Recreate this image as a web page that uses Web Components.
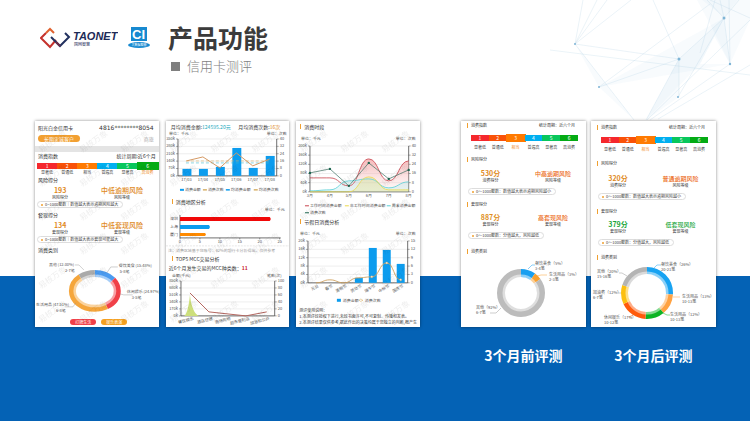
<!DOCTYPE html>
<html lang="zh-CN">
<head>
<meta charset="utf-8">
<title>产品功能 - 信用卡测评</title>
<style>
  body { margin: 0; font-family: "Noto Sans CJK SC", "Liberation Sans", sans-serif; color: #404040; }
</style>
</head>
<body>
<feature-slide></feature-slide>
<script>
const BASE = `
  * { box-sizing: border-box; }
  :host { display: block; }
  svg { display: block; width: 100%; height: auto; }
  svg text { font-size: 4px; fill: #555; }
`;

function define(name, html) {
  customElements.define(name, class extends HTMLElement {
    constructor() {
      super();
      this.attachShadow({ mode: 'open' });
    }
    connectedCallback() {
      const body = typeof html === 'function' ? html(this) : html;
      this.shadowRoot.innerHTML = `<style>${BASE}</style>${body}`;
    }
  });
}

/* ---------- drawing helpers ---------- */
const text = (x, y, s, extra = '') => `<text x="${x}" y="${y}" ${extra}>${s}</text>`;
const poly = (pts, colour, extra = '') =>
  `<polyline points="${pts.map(p => p.join()).join(' ')}" fill="none" stroke="${colour}" ${extra}/>`;

function curve(pts) {
  let d = `M${pts[0].join()}`;
  for (let i = 1; i < pts.length; i++) {
    const m = (pts[i - 1][0] + pts[i][0]) / 2;
    d += ` C${m},${pts[i - 1][1]} ${m},${pts[i][1]} ${pts[i].join()}`;
  }
  return d;
}

function axes({ x0, x1, y0, y1, left, right, cats, xs, rotate }) {
  const step = (y1 - y0) / (left.length - 1);
  let out = '';
  left.forEach((l, i) => {
    const y = y0 + i * step;
    out += `<path d="M${x0} ${y}H${x1}" stroke="#ddd" stroke-width=".5"/>
            <path d="M${x0 - 2} ${y}h2M${x1} ${y}h2" stroke="#555" stroke-width=".5"/>`;
    out += text(x0 - 3, y + 1, l, 'text-anchor="end"') + text(x1 + 3, y + 1, right[i]);
  });
  out += `<path d="M${x0} ${y0}V${y1}H${x1}V${y0}" fill="none" stroke="#333" stroke-width=".7"/>`;
  cats.forEach((c, i) => {
    out += rotate
      ? text(xs[i] + 3, y1 + 4, c, `text-anchor="end" transform="rotate(${rotate} ${xs[i] + 3} ${y1 + 4})"`)
      : text(xs[i], y1 + 5, c, 'text-anchor="middle"');
  });
  return out;
}

function ring(cx, cy, rx, ry, width, parts) {
  let at = 0, out = '';
  for (const [share, colour] of parts) {
    out += `<ellipse cx="${cx}" cy="${cy}" rx="${rx - width / 2}" ry="${ry - width / 2}" pathLength="100"
      fill="none" stroke="${colour}" stroke-width="${width}" stroke-dasharray="${share} ${100 - share}"
      stroke-dashoffset="${25 - at}"/>`;
    at += share;
  }
  return out + `<ellipse cx="${cx}" cy="${cy}" rx="${rx - width + 1}" ry="${ry - width + 1}"
    fill="none" stroke="#fff" stroke-opacity=".5" stroke-width="3"/>`;
}

/* ---------- header ---------- */
define('brand-logo', `
  <style>
    :host { display: flex; align-items: center; gap: 10px; }
    .mark { width: 78px; }
    .ci { width: 22px; }
    .mark .name { font: italic bold 11px "Liberation Sans", sans-serif; fill: #1d2b57; }
    .mark .sub { font-size: 4px; fill: #1d2b57; }
    .ci .letters { font: bold 13px "Liberation Sans", sans-serif; fill: #fff; }
    .ci .tiny { font-size: 3px; fill: #fff; }
  </style>
  <svg class="mark" viewBox="0 0 78 22">
    <g fill="none" stroke-width="2">
      <path d="M14 6 10 2 6 6" stroke="#e0622f"/>
      <path d="M6 6 1 11 10 20 16 13" stroke="#c5322d"/>
      <path d="M11 10 20 19 29 10 25 6" stroke="#22315f"/>
      <path d="M16 15 20 19" stroke="#6c2c48"/>
    </g>
    <text class="name" x="33" y="13">TAONET</text>
    <text class="sub" x="34" y="19">国网智慧</text>
  </svg>
  <svg class="ci" viewBox="0 0 22 22">
    <path d="M3 0H19V14H3Z" fill="#1789d0"/>
    <text class="letters" x="4" y="12">CI</text>
    <ellipse cx="11" cy="18" rx="11" ry="3" fill="#1789d0"/>
    <text class="tiny" x="11" y="19" text-anchor="middle">大数据智能</text>
  </svg>`);

define('slide-heading', `
  <style>
    h1 { margin: 0; font-size: 25px; line-height: 30px; font-weight: 700; color: #3b3b3b; }
    p { margin: 5px 0 0 3px; display: flex; align-items: center; gap: 7px; font-size: 13px; line-height: 18px; font-weight: 300; color: #7f7f7f; }
    i { width: 9px; height: 9px; background: #7f7f7f; }
  </style>
  <h1><slot name="title"></slot></h1>
  <p><i></i><slot name="sub"></slot></p>`);

define('network-art', `
  <svg viewBox="0 0 200 122">
    <g fill="#4a8fd0" fill-opacity=".04">
      <path d="M49 87 174 18 150 64 180 64Z"/>
      <path d="M147 0H200V20L180 64 160 24Z"/><path d="M152 0H188L174 17Z"/>
      <path d="M129 59 96 120 129 97Z"/><path d="M129 59 174 18 150 64 96 120Z"/>
      <path d="M25 44 49 87 84 120Z"/><path d="M174 18 180 64 164 36Z"/>
    </g>
    <g fill="none" stroke="#a9cde0" stroke-opacity=".4" stroke-width=".6">
      <path d="M25 44 33 0M25 44 47 0M25 44 57 0M25 44 81 0M25 44 129 59M25 44 84 120M0 50 200 75M103 0 129 59V97M49 87 129 59 174 18M49 87 160 4M174 18 128 97M96 120 129 59M97 120 200 20M100 120 180 64M108 119 200 65M180 64 179 0M180 64 174 18 157 0M174 18 170 0M174 18 189 0M160 0 200 18M150 53 165 0"/>
    </g>
    <g fill="#7fb5d6"><circle cx="25" cy="44" r="1"/><circle cx="49" cy="87" r="1"/><circle cx="129" cy="59" r="1.5"/>
      <circle cx="174" cy="18" r="1.5"/><circle cx="180" cy="64" r="1.2"/><circle cx="128" cy="97" r="1"/></g>
  </svg>`);

/* ---------- report building blocks ---------- */
define('report-card', `
  <style>
    :host { position: relative; min-height: 206px; background: #fff; overflow: hidden; box-shadow: 0 0 3px rgba(0,0,0,.45); }
    .mark { position: absolute; inset: 0; height: 100%; pointer-events: none; }
    .mark text { font-size: 8px; fill: #000; fill-opacity: .07; }
    :host([plain]) .mark { display: none; }
  </style>
  <slot></slot>
  <svg class="mark" aria-hidden="true"><defs>
    <pattern id="w" width="41" height="34" patternUnits="userSpaceOnUse">
      <text transform="translate(6 32) rotate(-35)">易核万象</text>
    </pattern></defs><rect width="100%" height="100%" fill="url(#w)"/></svg>`);

define('section-title', `
  <style>
    :host { display: flex; justify-content: space-between; align-items: center; height: 7px; font-size: 5px; line-height: 7px; color: #333; white-space: nowrap; }
    :host([small]) { font-size: 4px; }
    .t { display: flex; align-items: center; gap: 3px; }
    :host([marker]) .t::before { content: ""; width: 1px; height: 5px; background: #f0a030; }
  </style>
  <span class="t"><slot></slot></span><slot name="end"></slot>`);

define('index-scale', el => {
  const on = +el.getAttribute('active');
  const cs = ['#f5282d', '#f95208', '#ff7a00', '#00aff0', '#08c75c', '#04ab14'];
  const ls = ['显著低', '普通低', '相当', '普遍高', '显著高', '高消费'];
  return `<style>
    ol { margin: 0; padding: 0; list-style: none; display: grid; grid-template-columns: repeat(6, 1fr); text-align: center; }
    li { font-size: 4px; line-height: 6px; }
    b { display: block; height: 6px; font-size: 5px; font-weight: 400; color: #fff; }
    span { display: block; margin-top: var(--label-gap, 0px); }
    .on b { box-shadow: 0 0 0 1px var(--c); }
    .on span { color: #f08a1c; }
  </style><ol>${ls.map((l, i) => `<li class="${i + 1 === on ? 'on' : ''}" style="--c:${cs[i]}"><b style="background:${cs[i]}">${i + 1}</b><span>${l}</span></li>`).join('')}</ol>`;
});

define('score-pair', `
  <style>
    :host { display: grid; grid-template-columns: var(--cols, 52fr 76fr); text-align: center; white-space: nowrap; color: #e08a1e; }
    .v { font-size: 7px; line-height: 9px; font-weight: 700; }
    .r { font-size: var(--risk-size, 7px); font-weight: 500; color: var(--risk, inherit); }
    .c { font-size: 4px; line-height: 5px; color: #333; }
  </style>
  <span class="v"><slot name="score"></slot></span><span class="v r"><slot name="risk"></slot></span>
  <span class="c"><slot name="a"></slot></span><span class="c"><slot name="b"></slot></span>`);

define('hint-pill', `
  <style>
    :host { display: flex; align-items: center; gap: 2px; width: max-content; height: 7px; padding: 0 4px 0 3px; border: 1px solid #ddd; border-radius: 4px; font-size: 4px; line-height: 5px; color: #444; white-space: nowrap; }
    i { width: 2px; height: 2px; border-radius: 50%; background: #f0a030; }
  </style><i></i><slot></slot>`);

/* ---------- charts ---------- */
define('spend-ring', `<svg viewBox="0 0 124 66">
  ${ring(60, 38, 26, 21, 7, [[15.5, '#4b9bf0'], [25, '#f04048'], [47.5, '#f5a63c'], [12, '#aaa']])}
  <g fill="none" stroke="#888" stroke-width=".4"><path d="M40 12h4l5 5M83 14h-7l-4 6M98 42h-9l-4-1M30 54h8l3-4"/></g>
  ${text(14, 13, '其他 (12.00%)')}${text(30, 19, '2-7笔')}
  ${text(84, 14, '餐饮美食 (15.48%)')}${text(85, 20, '5-8笔')}
  ${text(92, 40, '休闲娱乐 (24.97%)')}${text(97, 46, '3-5笔')}
  ${text(1, 53, '生活用品 (47.51%)')}${text(21, 59, '6-8笔')}</svg>`);

const monthly = [186.5, 203, 220, 236.5, 253, 270].map(x => x - 166);
define('monthly-chart', `<svg viewBox="0 0 124 64">
  ${text(3, 4, '单位：千元')}${text(121, 4, '单位：次数', 'text-anchor="end"')}
  ${axes({ x0: 12, x1: 111, y0: 8, y1: 45, left: ['350k', '280k', '210k', '140k', '70k', '0k'], right: [40, 32, 24, 16, 8, 0], cats: ['17/03', '17/04', '17/05', '17/06', '17/07', '17/08'], xs: monthly })}
  ${[38, 38, 36, 17, 37, 25].map((y, i) => `<path d="M${monthly[i] - 4} ${y}h9V45h-9Z" fill="#0c9cee"/>`).join('')}
  <path d="M20 32H104" stroke="#3fb8cf" stroke-width=".6" stroke-dasharray="3 2"/>
  <path d="M20 30H104" stroke="#d8b26a" stroke-width=".6" stroke-dasharray="3 2"/>
  ${poly([30, 26, 37, 22, 35, 28].map((y, i) => [monthly[i], y]), '#d59a64')}
  <g stroke-width="1.5"><path d="M14 59h4" stroke="#0c9cee" stroke-width="2"/><path d="M37 59h4" stroke="#d8b26a"/><path d="M60 59h4" stroke="#0c9cee"/><path d="M88 59h4" stroke="#d8b26a"/></g>
  ${text(19, 60.5, '消费金额')}${text(42, 60.5, '消费次数')}${text(65, 60.5, '均消费金额')}${text(93, 60.5, '均消费次数')}</svg>`);

define('region-chart', `<svg viewBox="0 0 124 48">
  ${text(119, 4, '单位：千元', 'text-anchor="end"')}
  <path d="M14 8V31H115" fill="none" stroke="#333" stroke-width=".7"/>
  ${[0, 5, 10, 15, 20, 25].map((n, i) => `<path d="M${14 + 20 * i} 31v1.5" stroke="#333" stroke-width=".5"/>` + text(14 + 20 * i, 36, n, 'text-anchor="middle"')).join('')}
  <path d="M14 10H104q2 2 0 4H14Z" fill="#f10808"/><path d="M14 18H43q2 2 0 4H14Z" fill="#0c9cee"/><path d="M14 26H39q2 1.5 0 3H14Z" fill="#ff8a00"/>
  ${text(12, 13.5, '深圳', 'text-anchor="end"')}${text(12, 21.5, '上海', 'text-anchor="end"')}${text(12, 29.5, '厦门', 'text-anchor="end"')}
  <path d="M0 39H124" stroke="#ccc" stroke-width=".5" stroke-dasharray="2 1"/>
  <g opacity=".6">${text(2, 45, '注：消费区域基于您账号：62%的银行卡分析得出，仅供参考')}</g></svg>`);

define('mcc-chart', `<svg viewBox="0 0 124 54">
  ${text(6, 4, '金额(千元)')}${text(116, 4, '笔数(次)', 'text-anchor="end"')}
  ${axes({ x0: 15, x1: 109, y0: 8, y1: 43, left: ['850k', '680k', '510k', '340k', '170k', '0k'], right: [100, 80, 60, 40, 20, 0], cats: ['餐饮娱乐', '酒店住宿', '商场购物', '超市便利店', '加油和公共'], xs: [25, 44, 62, 81, 101], rotate: -14 })}
  <path d="M18 43Q22 41 24 22 26 40 33 43Z" fill="#cddf7c"/>
  ${poly([[24, 20], [43, 39], [80, 43], [101, 39]], '#b4665f')}</svg>`);

const six = [14, 34, 53, 73, 93, 113];
const at = ys => ys.map((y, i) => [six[i], y]);
define('period-chart', `<svg viewBox="0 0 124 82">
  <defs><linearGradient id="r" x2="0" y2="1"><stop stop-color="#f08a8a" stop-opacity=".6"/><stop offset="1" stop-color="#fbdcdc" stop-opacity=".2"/></linearGradient></defs>
  ${text(5, 4, '单位：千元')}${text(120, 4, '单位：次数', 'text-anchor="end"')}
  ${axes({ x0: 14, x1: 113, y0: 10, y1: 56, left: ['200k', '160k', '120k', '80k', '40k', '0k'], right: [40, 32, 24, 16, 8, 0], cats: ['3月', '4月', '5月', '6月', '7月', '8月'], xs: six })}
  <path d="${curve([[53, 50], [73, 23], [93, 45], [113, 25]])}V56H53Z" fill="url(#r)"/>
  <path d="${curve(at([55, 54, 45, 43, 52, 46]))}V56H14Z" fill="#7fdce0" fill-opacity=".2"/>
  <path d="${curve(at([56, 56, 56, 41, 54, 54]))}V56H14Z" fill="#f0e060" fill-opacity=".25"/>
  <g fill="none" stroke-width=".8"><path d="${curve(at([42, 42, 50, 23, 45, 25]))}" stroke="#c8434d"/>
  <path d="${curve(at([55, 54, 45, 43, 52, 46]))}" stroke="#58cfd6"/><path d="${curve(at([56, 56, 56, 41, 54, 54]))}" stroke="#ead94c"/></g>
  ${poly(at([37, 33, 50, 27, 43, 34]), '#3d6f60', 'stroke-width=".7"')}
  ${at([37, 33, 50, 27, 43, 34]).map(([x, y]) => `<circle cx="${x}" cy="${y}" r="1.2" fill="#1d6650"/>`).join('')}
  <g stroke-width="1"><path d="M9 70h4" stroke="#c8434d"/><path d="M49 70h4" stroke="#ead94c"/><path d="M91 70h4" stroke="#58cfd6"/><path d="M9 77h4" stroke="#1d6650"/></g>
  ${text(14, 71.5, '工作时间消费金额')}${text(54, 71.5, '非工作时间消费金额')}${text(96, 71.5, '周末消费金额')}${text(14, 78.5, '消费次数')}</svg>`);

const seven = [20, 34, 48, 63, 77, 91, 105];
const holidayLine = [[20, 49], [34, 46], [48, 49], [62, 44], [76, 43], [91, 29], [105, 46]];
define('holiday-chart', `<svg viewBox="0 -5 124 77">
  ${text(4, 1, '单位：千元')}${text(120, 1, '单位：次数', 'text-anchor="end"')}
  ${axes({ x0: 12, x1: 112, y0: 7, y1: 49, left: ['20k', '16k', '12k', '8k', '4k', '0k'], right: [15, 12, 9, 6, 3, 0], cats: ['元旦', '春节', '清明节', '劳动节', '端午节', '中秋节', '国庆节'], xs: seven, rotate: -30 })}
  ${[44, 14, 16, 30].map((y, i) => `<path d="M${seven[i + 3] - 4} ${y}h8V49h-8Z" fill="#0c9cee"/>`).join('')}
  <path d="${curve(holidayLine)}" fill="none" stroke="#cfa05c" stroke-width=".9"/>
  ${holidayLine.slice(4).map(([x, y]) => `<circle cx="${x}" cy="${y}" r="1" fill="#fff" stroke="#cfa05c" stroke-width=".5"/>`).join('')}
  <path d="M41 65h4v3h-4Z" fill="#0c9cee"/><path d="M63 66.5h4" stroke="#d8b26a"/><circle cx="65" cy="66.5" r="1.2" fill="#fff" stroke="#d8b26a" stroke-width=".5"/>
  ${text(47, 68, '消费金额')}${text(69, 68, '消费次数')}</svg>`);

define('before-ring', `<svg viewBox="0 0 125 70">
  ${ring(60, 38, 24, 24, 8, [[10, '#189ff0'], [5, '#f8a030'], [85, '#bcbcbc']])}
  <g fill="none" stroke-width=".5"><path d="M67 14l4-4h3" stroke="#189ff0"/><path d="M76 21l4-1h6" stroke="#f8a030"/><path d="M40 53l-5 5h-6" stroke="#999"/></g>
  ${text(74, 10, '餐饮美食（5%）')}${text(74, 15, '3-4笔')}${text(88, 21, '生活用品（3%）')}${text(88, 26, '2-3笔')}
  ${text(15, 54, '其他（92%）')}${text(15, 59, '6-7笔')}</svg>`);

define('after-ring', `<svg viewBox="0 2 125 65">
  ${ring(56, 34, 26, 26, 7, [[26, '#18a3f2'], [13, '#ffa242'], [12, '#0cb424'], [17, '#ff5a0c'], [12, '#fcc010'], [20, '#b4b4b4']])}
  <g fill="none" stroke-width=".5"><path d="M63 9l3-3h4" stroke="#18a3f2"/><path d="M82 38h7" stroke="#ffa242"/><path d="M72 54l4 2h3" stroke="#0cb424"/><path d="M42 56l-4 2" stroke="#ff5a0c"/><path d="M36 17l-5-3h-3M30 34h-3" stroke="#999"/></g>
  ${text(70, 7, '餐饮美食（26%）')}${text(70, 12, '20-21笔')}${text(91, 39, '生活用品（13%）')}${text(91, 44, '10-13笔')}
  ${text(79, 57, '生活用品（12%）')}${text(79, 62, '10-13笔')}${text(13, 60, '休闲娱乐（17%）')}${text(13, 65, '10-12笔')}
  ${text(2, 35, '加油费（12%）')}${text(2, 40, '6-7笔')}${text(6, 14, '其他（20%）')}${text(6, 19, '15-16笔')}</svg>`);

/* ---------- the five reports ---------- */
define('rating-report', `
  <style>
    .row { display: flex; justify-content: space-between; align-items: center; padding: 0 5px 0 3px; height: 8px; font-size: 5px; line-height: 7px; color: #333; }
    .first { padding-top: 2px; height: 10px; }
    .first b { font: 6px/7px "DejaVu Sans", sans-serif; }
    .second { margin-top: 3px; }
    .tag { width: 42px; background: #f2a032; color: #fff; border-radius: 4px; text-align: center; }
    .grey { color: #aaa; }
    .band { height: 6px; margin: 4px 0 0; background: #e4e4e4; }
    section-title { padding: 0 3px; }
    index-scale { margin: 4px 1px 1px 2px; }
    score-pair { margin-top: 3px; }
    hint-pill { margin: 1px 0 3px 2px; }
    .acts { display: flex; justify-content: center; gap: 5px; padding-left: 4px; }
    button { width: 26px; height: 6px; padding: 0; border: 0; border-radius: 3px; background: #f04048; color: #fff; font: 4px/6px "Noto Sans CJK SC", sans-serif; }
    .o { background: #f5a020; }
  </style>
  <report-card>
    <div class="row first"><span>阳光白金信用卡</span><b>4816********8054</b></div>
    <div class="row second"><span class="tag">长期忠诚客户</span><span class="grey">商旅</span></div>
    <div class="band"></div>
    <section-title>消费指数<span slot="end">统计周期:近6个月</span></section-title>
    <index-scale active="6"></index-scale>
    <section-title>风险得分</section-title>
    <score-pair><span slot="score">193</span><span slot="risk">中低逾期风险</span><span slot="a">风险得分</span><span slot="b">风险等级</span></score-pair>
    <hint-pill>0~1000整数｜数值越大表示逾期风险越大</hint-pill>
    <section-title>套现得分</section-title>
    <score-pair><span slot="score">134</span><span slot="risk">中低套现风险</span><span slot="a">套现得分</span><span slot="b">套现等级</span></score-pair>
    <hint-pill>0~1000整数｜数值越大表示套现可能越大</hint-pill>
    <section-title>消费类别</section-title>
    <spend-ring></spend-ring>
    <div class="acts"><button>打牌生活</button><button class="o">娱乐表演</button></div>
  </report-card>`);

define('amount-report', `
  <style>
    .sum { display: flex; justify-content: space-between; padding: 2px 9px 1px 5px; font-size: 5px; line-height: 7px; white-space: nowrap; }
    .teal { color: #23a9bd; } .or { color: #e08a1e; } .red { color: #c8202a; }
    section-title { padding: 0 6px; }
    .region { margin: 3px 0 2px; }
    p { margin: 2px 0 2px 3px; font-size: 5px; line-height: 7px; }
  </style>
  <report-card>
    <div class="sum"><span>月均消费金额:<span class="teal">124595.20元</span></span><span>月均消费次数:<span class="or">16次</span></span></div>
    <monthly-chart></monthly-chart>
    <section-title marker class="region">消费地区分析</section-title>
    <region-chart></region-chart>
    <section-title marker>TOP5 MCC交易分析</section-title>
    <p>近6个月发生交易的MCC种类数：<b class="red">11</b></p>
    <mcc-chart></mcc-chart>
  </report-card>`);

define('period-report', `
  <style>
    section-title { padding: 0 4px; }
    .one { margin: 2px 0 6px; }
    .two { margin-bottom: 4px; }
    .notes { padding: 1px 0 0 3px; }
    p { margin: 0; font-size: 4px; line-height: 6px; white-space: nowrap; }
  </style>
  <report-card>
    <section-title marker class="one">消费时段</section-title>
    <period-chart></period-chart>
    <section-title marker class="two">节假日消费分析</section-title>
    <holiday-chart></holiday-chart>
    <div class="notes"><p>测评使用说明：</p>
    <p>1.本测评经授权下进行,未经书面许可,不可复制、传播和发表。</p>
    <p>2.本测评结果仅供参考,据此作出的决策均属于您独立的判断,概产生</p></div>
  </report-card>`);

define('compare-report', el => {
  const a = n => el.getAttribute(n);
  const late = el.hasAttribute('after');
  return `<style>
    section-title { padding: 0 11px 0 6px; }
    :host { --cols: ${late ? '54fr 71fr' : '59fr 66fr'}; --risk-size: 6px; --label-gap: 3px; }
    index-scale { margin: 6px 8px 0 10px; }
    .in { padding-top: ${late ? 3 : 1}px; }
    .gap { margin-top: ${late ? 8 : 6}px; }
    score-pair { margin-top: ${late ? 7 : 6}px; }
    .two { margin-top: 5px; }
    hint-pill { margin: 5px 0 0 7px; }
    .last { margin-top: ${late ? 8 : 9}px; }
    .s { color: ${a('tone')}; }
  </style>
  <report-card plain><div class="in">
    <section-title small marker>消费指数<span slot="end">统计周期：近六个月</span></section-title>
    <index-scale active="3"></index-scale>
    <section-title small marker class="gap">风险得分</section-title>
    <score-pair style="--risk:#ec6a20"><span slot="score">${a('risk')}分</span><span slot="risk">${a('risk-level')}</span><span slot="a">消费得分</span><span slot="b">风险等级</span></score-pair>
    <hint-pill>0～1000整数：数值越大表示逾期风险越小</hint-pill>
    <section-title small marker class="gap">套现得分</section-title>
    <score-pair class="two" style="--risk:${a('tone2')}"><span slot="score" class="s">${a('cash')}分</span><span slot="risk">${a('cash-level')}</span><span slot="a">套现得分</span><span slot="b">套现等级</span></score-pair>
    <hint-pill>0～1000整数：分值越大，风险越低</hint-pill>
    <section-title small marker class="last">消费类别</section-title>
    ${late ? '<after-ring></after-ring>' : '<before-ring></before-ring>'}
  </div></report-card>`;
});

/* ---------- slide ---------- */
define('feature-slide', `
  <style>
    :host { position: relative; min-height: 100vh; background: linear-gradient(#fff 276px, #0462b5 276px); overflow: hidden; }
    network-art { position: absolute; top: 0; right: 0; width: 200px; }
    header { display: flex; align-items: flex-start; gap: 18px; padding: 22px 40px 0; height: 121px; }
    brand-logo { margin-top: 5px; }
    main { position: relative; display: grid; grid-template-columns: 385fr 255fr; gap: 41px; padding: 0 34px 0 35px; }
    .three, .two { display: grid; grid-template-columns: repeat(3, minmax(0, 1fr)); gap: 7px; align-items: start; }
    .two { grid-template-columns: repeat(2, minmax(0, 1fr)); gap: 5px; }
    figure { margin: 0; min-width: 0; }
    figcaption { margin-top: 18px; font-size: 14px; line-height: 20px; font-weight: 700; color: #fff; text-align: center; }
  </style>
  <network-art></network-art>
  <header>
    <brand-logo></brand-logo>
    <slide-heading><span slot="title">产品功能</span><span slot="sub">信用卡测评</span></slide-heading>
  </header>
  <main>
    <div class="three"><rating-report></rating-report><amount-report></amount-report><period-report></period-report></div>
    <div class="two">
      <figure><compare-report risk="530" risk-level="中高逾期风险" cash="887" cash-level="高套现风险" tone="#e0901e" tone2="#ec6a20"></compare-report><figcaption>3个月前评测</figcaption></figure>
      <figure><compare-report after risk="320" risk-level="普通逾期风险" cash="379" cash-level="低套现风险" tone="#1aa63a" tone2="#1aa63a"></compare-report><figcaption>3个月后评测</figcaption></figure>
    </div>
  </main>`);
</script>
</body>
</html>
